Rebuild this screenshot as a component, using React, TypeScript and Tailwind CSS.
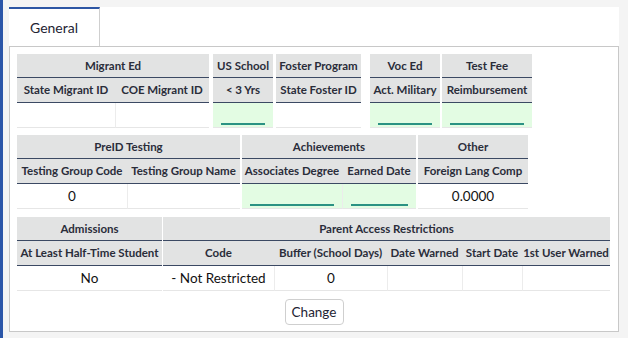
import React from 'react';

type Col = {
  label: string;
  w: string;
  value?: string;
  green?: boolean;
};

type GroupProps = {
  title: string;
  w: string;
  cols: Col[];
  className?: string;
};

const h1 = 'h-[24px] flex items-center justify-center bg-[#e2e3e3] border-b border-[#3b4963] text-[11.5px] font-bold text-[#2a2d3a] whitespace-nowrap';
const h2 = 'h-[25px] flex items-center justify-center bg-[#e2e3e3] border-b border-[#3b4963] text-[11.5px] font-bold text-[#2a2d3a] whitespace-nowrap';

const Group: React.FC<GroupProps> = ({ title, w, cols, className }) => (
  <div className={`${w} shrink-0 ${className ?? ''}`}>
    <div className={h1}>{title}</div>
    <div className="flex">
      {cols.map((c) => (
        <div key={c.label} className={`${c.w} ${h2}`}>{c.label}</div>
      ))}
    </div>
    <div className="flex">
      {cols.map((c, i) => (
        <div
          key={c.label}
          className={`${c.w} h-[25px] border-b border-[#e6e6e6] ${i > 0 ? 'border-l border-l-[#ececec]' : ''} ${c.green ? 'bg-[#e3fce3] px-[8px] pb-[2px] flex items-end' : 'flex items-center justify-center text-[13.5px] text-[#111]'}`}
        >
          {c.green ? <div className="h-[2px] w-full bg-[#2b9283]" /> : c.value}
        </div>
      ))}
    </div>
  </div>
);

export default function App() {
  return (
    <div className="min-h-[338px] bg-[#f4f4f4] flex font-['Lato',sans-serif]">
      {/* left accent */}
      <div className="w-[3px] bg-[#2b56a8] shrink-0" />

      <div className="ml-[6px] mt-[7px] w-[610px] h-[325px] bg-white flex flex-col">
        {/* tab strip */}
        <div className="flex h-[39px]">
          <div className="w-[91px] border-t-2 border-t-[#2d56a4] border-r border-r-[#cfcfcf] flex items-center justify-center text-[14px] text-[#1e2433]">
            General
          </div>
        </div>

        {/* content */}
        <div className="flex-1 border border-[#c8c8c8] pt-[7px] pl-[7px] flex flex-col">
          <div className="flex">
            <Group
              title="Migrant Ed"
              w="w-[192px]"
              cols={[
                { label: 'State Migrant ID', w: 'w-[98px]' },
                { label: 'COE Migrant ID', w: 'w-[94px]' },
              ]}
            />
            <Group className="ml-[4px]" title="US School" w="w-[60px]" cols={[{ label: '< 3 Yrs', w: 'w-[60px]', green: true }]} />
            <Group className="ml-[3px]" title="Foster Program" w="w-[85px]" cols={[{ label: 'State Foster ID', w: 'w-[85px]' }]} />
            <Group className="ml-[9px]" title="Voc Ed" w="w-[70px]" cols={[{ label: 'Act. Military', w: 'w-[70px]', green: true }]} />
            <Group className="ml-[2px]" title="Test Fee" w="w-[90px]" cols={[{ label: 'Reimbursement', w: 'w-[90px]', green: true }]} />
          </div>

          <div className="flex mt-[7px]">
            <Group
              title="PreID Testing"
              w="w-[223px]"
              cols={[
                { label: 'Testing Group Code', w: 'w-[110px]', value: '0' },
                { label: 'Testing Group Name', w: 'w-[113px]' },
              ]}
            />
            <Group
              className="ml-[2px]"
              title="Achievements"
              w="w-[174px]"
              cols={[
                { label: 'Associates Degree', w: 'w-[100px]', green: true },
                { label: 'Earned Date', w: 'w-[74px]', green: true },
              ]}
            />
            <Group className="ml-[2px]" title="Other" w="w-[110px]" cols={[{ label: 'Foreign Lang Comp', w: 'w-[110px]', value: '0.0000' }]} />
          </div>

          <div className="flex mt-[8px]">
            <Group title="Admissions" w="w-[145px]" cols={[{ label: 'At Least Half-Time Student', w: 'w-[145px]', value: 'No' }]} />
            <Group
              className="ml-[1px]"
              title="Parent Access Restrictions"
              w="w-[447px]"
              cols={[
                { label: 'Code', w: 'w-[111px]', value: '- Not Restricted' },
                { label: 'Buffer (School Days)', w: 'w-[113px]', value: '0' },
                { label: 'Date Warned', w: 'w-[75px]' },
                { label: 'Start Date', w: 'w-[60px]' },
                { label: '1st User Warned', w: 'w-[88px]' },
              ]}
            />
          </div>

          <div className="flex justify-center mt-[8px] pr-[7px]">
            <button
              type="button"
              className="w-[59px] h-[26px] rounded-[4px] border border-[#cfcfcf] bg-white text-[13.5px] text-[#1e2433]"
            >
              Change
            </button>
          </div>
        </div>
      </div>
    </div>
  );
}
